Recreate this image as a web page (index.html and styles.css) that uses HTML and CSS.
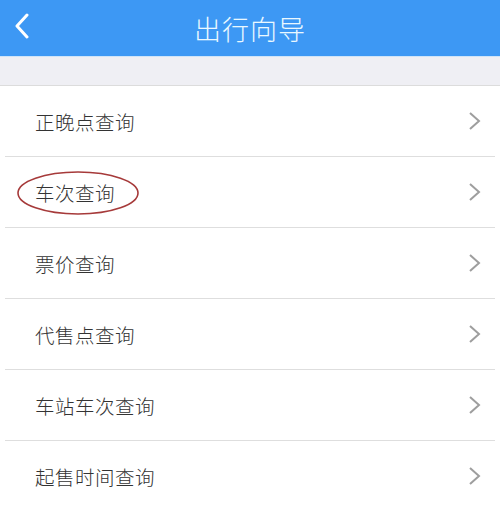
FILE: index.html
```html
<!DOCTYPE html>
<html lang="zh">
<head>
<meta charset="utf-8">
<link rel="stylesheet" href="styles.css">
</head>
<body>
<div class="page">
  <header class="nav">
    <span class="back">
      <svg width="16" height="26" viewBox="0 0 16 26"><polyline points="13,2 3,13 13,24" fill="none" stroke="#fff" stroke-width="3" stroke-linecap="round" stroke-linejoin="round"/></svg>
    </span>
    <h1 class="title">出行向导</h1>
  </header>
  <div class="gap"></div>
  <ul class="list">
    <li class="row"><span class="label">正晚点查询</span><span class="chev"><svg width="13" height="20" viewBox="0 0 13 20"><polyline points="2,2 11,10 2,18" fill="none" stroke="#9e9e9e" stroke-width="2"/></svg></span></li>
    <li class="row"><span class="label marked">车次查询<svg class="ring" width="124" height="46" viewBox="0 0 124 46"><ellipse cx="62" cy="23" rx="60" ry="21" fill="none" stroke="#a63a3a" stroke-width="1.6"/></svg></span><span class="chev"><svg width="13" height="20" viewBox="0 0 13 20"><polyline points="2,2 11,10 2,18" fill="none" stroke="#9e9e9e" stroke-width="2"/></svg></span></li>
    <li class="row"><span class="label">票价查询</span><span class="chev"><svg width="13" height="20" viewBox="0 0 13 20"><polyline points="2,2 11,10 2,18" fill="none" stroke="#9e9e9e" stroke-width="2"/></svg></span></li>
    <li class="row"><span class="label">代售点查询</span><span class="chev"><svg width="13" height="20" viewBox="0 0 13 20"><polyline points="2,2 11,10 2,18" fill="none" stroke="#9e9e9e" stroke-width="2"/></svg></span></li>
    <li class="row"><span class="label">车站车次查询</span><span class="chev"><svg width="13" height="20" viewBox="0 0 13 20"><polyline points="2,2 11,10 2,18" fill="none" stroke="#9e9e9e" stroke-width="2"/></svg></span></li>
    <li class="row"><span class="label">起售时间查询</span><span class="chev"><svg width="13" height="20" viewBox="0 0 13 20"><polyline points="2,2 11,10 2,18" fill="none" stroke="#9e9e9e" stroke-width="2"/></svg></span></li>
  </ul>
</div>
</body>
</html>
```

FILE: styles.css
```css
* { box-sizing: border-box; }
html, body { margin: 0; padding: 0; }
body {
  width: 500px;
  height: 507px;
  overflow: hidden;
  background: #fff;
  font-family: "Noto Sans CJK SC", "Noto Sans", sans-serif;
}
.page { display: flex; flex-direction: column; }
.nav {
  position: relative;
  height: 57px;
  background: #3d98f4;
  display: flex;
  align-items: center;
  justify-content: center;
  border-bottom: 1px solid #cfe4f8;
}
.back {
  position: absolute;
  left: 14px;
  top: 13px;
  display: flex;
}
.title {
  margin: 0;
  font-size: 27px;
  font-weight: 300;
  color: #eaf8ff;
  letter-spacing: 1px;
  line-height: 1;
}
.gap {
  height: 29px;
  background: #efeff4;
  border-bottom: 1px solid #dcdcdc;
}
.list { list-style: none; margin: 0; padding: 0; }
.row {
  height: 71px;
  margin: 0 5px;
  padding: 0 14px 0 30px;
  display: flex;
  align-items: center;
  justify-content: space-between;
  border-bottom: 1px solid #dedede;
}
.label {
  position: relative;
  font-size: 19.5px;
  font-weight: 300;
  color: #333;
  letter-spacing: 0.5px;
}
.ring {
  position: absolute;
  left: -19px;
  top: 50%;
  margin-top: -22px;
}
.chev { display: flex; }
```
